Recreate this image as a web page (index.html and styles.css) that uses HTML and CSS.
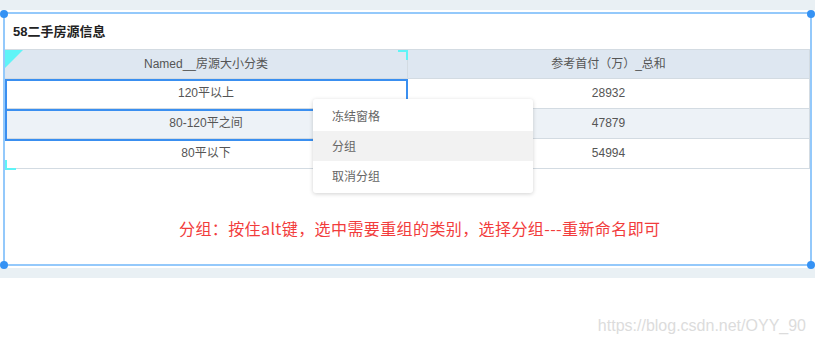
FILE: index.html
```html
<!DOCTYPE html>
<html lang="zh">
<head>
    <meta charset="UTF-8">
    <title>58二手房源信息</title>
    <link rel="stylesheet" href="styles.css">
</head>
<body>
    <div class="band"></div>

    <div class="widget">
        <span class="dot dot-tl"></span>
        <span class="dot dot-tr"></span>
        <span class="dot dot-bl"></span>
        <span class="dot dot-br"></span>

        <div class="title">58二手房源信息</div>

        <div class="table">
            <div class="cell head">Named__房源大小分类</div>
            <div class="cell head">参考首付（万）_总和</div>
            <div class="cell">120平以上</div>
            <div class="cell">28932</div>
            <div class="cell alt">80-120平之间</div>
            <div class="cell alt">47879</div>
            <div class="cell">80平以下</div>
            <div class="cell">54994</div>

            <span class="mark-tri"></span>
            <span class="mark-tr"></span>
            <span class="mark-bl"></span>
            <div class="select"><span class="select-mid"></span></div>
        </div>

        <div class="note">分组：按住alt键，选中需要重组的类别，选择分组---重新命名即可</div>
    </div>

    <div class="band band-bottom"></div>

    <div class="footer">https://blog.csdn.net/OYY_90</div>

    <ul class="menu">
        <li>冻结窗格</li>
        <li class="hover">分组</li>
        <li>取消分组</li>
    </ul>
</body>
</html>
```

FILE: styles.css
```css
* {
    margin: 0;
    padding: 0;
    box-sizing: border-box;
}

html, body {
    width: 100%;
    height: 100%;
}

body {
    background: #fff;
    font-family: "Liberation Sans", "Noto Sans CJK SC", sans-serif;
    font-size: 12px;
    color: #555;
}

.band {
    height: 10px;
    background-color: #e9f0f4;
}

.band-bottom {
    margin-top: 2px;
}

.widget {
    position: relative;
    margin: 2px 3px 0 3px;
    height: 254px;
    border: 2px solid #94c9fb;
}

.dot {
    position: absolute;
    width: 8px;
    height: 8px;
    border-radius: 50%;
    background-color: #3592f4;
}
.dot-tl { left: -5px; top: -4px; }
.dot-tr { right: -5px; top: -4px; }
.dot-bl { left: -5px; bottom: -5px; }
.dot-br { right: -5px; bottom: -5px; }

.title {
    height: 35px;
    line-height: 36px;
    padding-left: 8px;
    font-size: 13px;
    font-weight: bold;
    color: #222;
}

.table {
    position: relative;
    display: grid;
    grid-template-columns: 403px 1fr;
    border-top: 1px solid #d3dbe2;
}

.cell {
    height: 30px;
    line-height: 29px;
    text-align: center;
    border-bottom: 1px solid #d3dbe2;
    border-right: 1px solid #d3dbe2;
    color: #555;
}

.cell.head {
    height: 29px;
    line-height: 29px;
    background-color: #dee7f1;
}

.cell.alt {
    background-color: #edf2f7;
}

.mark-tri {
    position: absolute;
    left: 0;
    top: 0;
    width: 0;
    height: 0;
    border-top: 18px solid #5ff4f7;
    border-right: 18px solid transparent;
}

.mark-tr {
    position: absolute;
    left: 393px;
    top: 0;
    width: 10px;
    height: 10px;
    border-top: 2px solid #5ff4f7;
    border-right: 2px solid #5ff4f7;
}

.mark-bl {
    position: absolute;
    left: 0;
    top: 110px;
    width: 11px;
    height: 10px;
    border-left: 2px solid #5ff4f7;
    border-bottom: 2px solid #5ff4f7;
}

.select {
    position: absolute;
    left: 0;
    top: 29px;
    width: 403px;
    height: 62px;
    border: 2px solid #3a8ff0;
}

.select-mid {
    position: absolute;
    left: 0;
    right: 0;
    top: 28px;
    height: 2px;
    background-color: #3a8ff0;
}

.note {
    margin-top: 49px;
    padding-left: 174px;
    line-height: 20px;
    font-family: "Noto Sans CJK SC", sans-serif;
    font-size: 16px;
    letter-spacing: 0.4px;
    color: #f23c3c;
}

.footer {
    margin-top: 38px;
    padding-right: 9px;
    text-align: right;
    font-size: 16px;
    line-height: 20px;
    color: #dcdcdc;
}

.menu {
    position: absolute;
    left: 313px;
    top: 99px;
    width: 220px;
    padding: 2px 0;
    list-style: none;
    background: #fff;
    border-radius: 3px;
    box-shadow: 0 1px 4px rgba(0, 0, 0, 0.18);
}

.menu li {
    height: 30px;
    line-height: 30px;
    padding-left: 19px;
    font-family: "Noto Sans CJK SC", sans-serif;
    font-size: 12px;
    color: #666;
}

.menu li.hover {
    background-color: #f2f2f2;
}
```
